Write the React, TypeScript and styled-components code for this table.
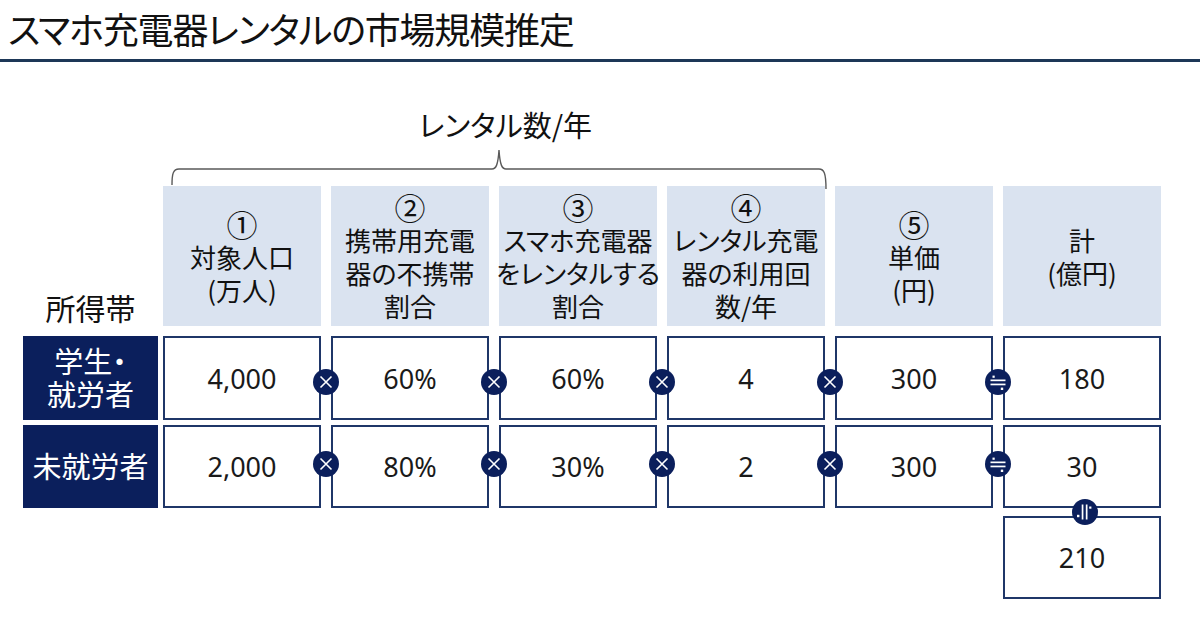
import React from "react";
import styled, { createGlobalStyle } from "styled-components";

const NAVY = "#0b1f5c";
const BORDER = "#1f3668";
const JP = `"Noto Sans CJK JP", "Noto Sans", sans-serif`;
const NUM = `"Noto Sans", "Noto Sans CJK JP", sans-serif`;

const Global = createGlobalStyle`
  html, body { margin: 0; padding: 0; background: #ffffff; }
  body { width: 1200px; height: 620px; overflow: hidden; font-family: ${JP}; color: #111; }
  * { box-sizing: border-box; }
`;

const Page = styled.div`
  width: 1200px;
  height: 620px;
  display: flex;
  flex-direction: column;
`;

const TitleBar = styled.header`
  padding: 10px 8px 0;
  height: 62px;
  border-bottom: 3px solid #1d3757;
`;

const Title = styled.h1`
  margin: 0;
  font-family: ${JP};
  font-weight: 400;
  font-size: 36px;
  line-height: 37px;
  letter-spacing: -1.2px;
  font-feature-settings: "palt";
  color: #111;
  white-space: nowrap;
`;

const Body = styled.main`
  padding: 45px 0 0 23px;
  display: flex;
  flex-direction: column;
`;

const Row = styled.div<{ $h: number; $mt?: number }>`
  display: flex;
  gap: 5px;
  height: ${(p) => p.$h}px;
  margin-top: ${(p) => p.$mt ?? 0}px;
`;

const LabelSlot = styled.div`
  width: 135px;
  flex: none;
  display: flex;
  align-items: flex-end;
  justify-content: center;
`;

const GroupLabel = styled.div`
  font-size: 30px;
  line-height: 36px;
  padding-bottom: 1px;
  font-feature-settings: "palt";
`;

const RowLabel = styled.div`
  width: 135px;
  flex: none;
  background: ${NAVY};
  color: #fff;
  font-size: 29px;
  line-height: 33px;
  font-feature-settings: "palt";
  display: flex;
  align-items: center;
  justify-content: center;
  text-align: center;
  padding-bottom: 2px;
`;

const Cells = styled.div<{ $end?: boolean }>`
  width: 998px;
  display: flex;
  gap: 10px;
  justify-content: ${(p) => (p.$end ? "flex-end" : "flex-start")};
`;

const CaptionBlock = styled.div`
  width: 663px;
  display: flex;
  flex-direction: column;
  align-items: center;
`;

const Caption = styled.div`
  font-size: 29px;
  line-height: 34px;
  font-feature-settings: "palt";
  padding-left: 22px;
`;

const Brace = styled.svg`
  display: block;
  margin-top: 7px;
  overflow: visible;
`;

const HeadCell = styled.div`
  width: 158px;
  flex: none;
  background: #dae3f0;
  display: flex;
  flex-direction: column;
  align-items: center;
  justify-content: center;
  font-size: 26px;
  line-height: 33px;
  font-feature-settings: "palt";
  text-align: center;
  white-space: nowrap;
  color: #111;
`;

const Line = styled.span<{ $big?: boolean }>`
  display: block;
  font-size: ${(p) => (p.$big ? "31px" : "inherit")};
  line-height: 33px;
`;

const DataCell = styled.div`
  position: relative;
  width: 158px;
  flex: none;
  border: 2px solid ${BORDER};
  background: #fff;
  display: flex;
  align-items: center;
  justify-content: center;
  font-family: ${NUM};
  font-size: 27px;
  color: #1a1a1a;
`;

const Badge = styled.span<{ $dy: number }>`
  position: absolute;
  left: -20px;
  top: calc(50% - 13px + ${(p) => p.$dy}px);
  width: 26px;
  height: 26px;
  border-radius: 50%;
  background: ${NAVY};
  display: flex;
  align-items: center;
  justify-content: center;
  z-index: 2;
`;

const SumBadge = styled.span`
  position: absolute;
  left: calc(50% - 10px);
  top: -19px;
  width: 26px;
  height: 26px;
  border-radius: 50%;
  background: ${NAVY};
  display: flex;
  align-items: center;
  justify-content: center;
  z-index: 2;
  svg { transform: rotate(90deg); }
`;

const TimesIcon = () => (
  <svg width="26" height="26" viewBox="0 0 26 26">
    <path d="M7.5 7.5 L18.5 18.5 M18.5 7.5 L7.5 18.5" stroke="#fff" strokeWidth="1.6" fill="none" />
  </svg>
);

const ApproxIcon = () => (
  <svg width="26" height="26" viewBox="0 0 26 26">
    <rect x="5.5" y="10.5" width="15" height="1.7" fill="#fff" />
    <rect x="5.5" y="14.6" width="15" height="1.7" fill="#fff" />
    <rect x="7.5" y="6.6" width="2.2" height="2.2" fill="#fff" />
    <rect x="15.8" y="18.6" width="2.4" height="2.4" fill="#fff" />
  </svg>
);

const headers: string[][] = [
  ["①", "対象人口", "(万人)"],
  ["②", "携帯用充電", "器の不携帯", "割合"],
  ["③", "スマホ充電器", "をレンタルする", "割合"],
  ["④", "レンタル充電", "器の利用回", "数/年"],
  ["⑤", "単価", "(円)"],
  ["計", "(億円)"],
];

type RowData = { label: string[]; values: string[]; dy: number; h: number; mt: number };

const rows: RowData[] = [
  { label: ["学生・", "就労者"], values: ["4,000", "60%", "60%", "4", "300", "180"], dy: 4, h: 84, mt: 10 },
  { label: ["未就労者"], values: ["2,000", "80%", "30%", "2", "300", "30"], dy: -3, h: 83, mt: 5 },
];

const isCircled = (s: string) => /^[①-⑳]$/.test(s);

export default function App() {
  return (
    <Page>
      <Global />
      <TitleBar>
        <Title>スマホ充電器レンタルの市場規模推定</Title>
      </TitleBar>
      <Body>
        <Row $h={79}>
          <LabelSlot />
          <CaptionBlock>
            <Caption>レンタル数/年</Caption>
            <Brace width="663" height="38" viewBox="0 0 663 38">
              <path
                d="M9 37 C9 26 10 21 16 21 L329 21 C333 21 335 17 336 2 C337 17 339 21 343 21 L656 21 C661 21 663 25 663 41"
                stroke="#5a5a5a"
                strokeWidth="1.4"
                fill="none"
              />
            </Brace>
          </CaptionBlock>
        </Row>
        <Row $h={140}>
          <LabelSlot>
            <GroupLabel>所得帯</GroupLabel>
          </LabelSlot>
          <Cells>
            {headers.map((lines, i) => (
              <HeadCell key={i}>
                {lines.map((l, j) => (
                  <Line key={j} $big={isCircled(l)}>
                    {l}
                  </Line>
                ))}
              </HeadCell>
            ))}
          </Cells>
        </Row>
        {rows.map((r, ri) => (
          <Row key={ri} $h={r.h} $mt={r.mt}>
            <RowLabel>
              <div>
                {r.label.map((l, j) => (
                  <Line key={j}>{l}</Line>
                ))}
              </div>
            </RowLabel>
            <Cells>
              {r.values.map((v, i) => (
                <DataCell key={i}>
                  {i > 0 && (
                    <Badge $dy={r.dy}>{i === 5 ? <ApproxIcon /> : <TimesIcon />}</Badge>
                  )}
                  {v}
                </DataCell>
              ))}
            </Cells>
          </Row>
        ))}
        <Row $h={83} $mt={8}>
          <LabelSlot />
          <Cells $end>
            <DataCell>
              <SumBadge>
                <ApproxIcon />
              </SumBadge>
              210
            </DataCell>
          </Cells>
        </Row>
      </Body>
    </Page>
  );
}
